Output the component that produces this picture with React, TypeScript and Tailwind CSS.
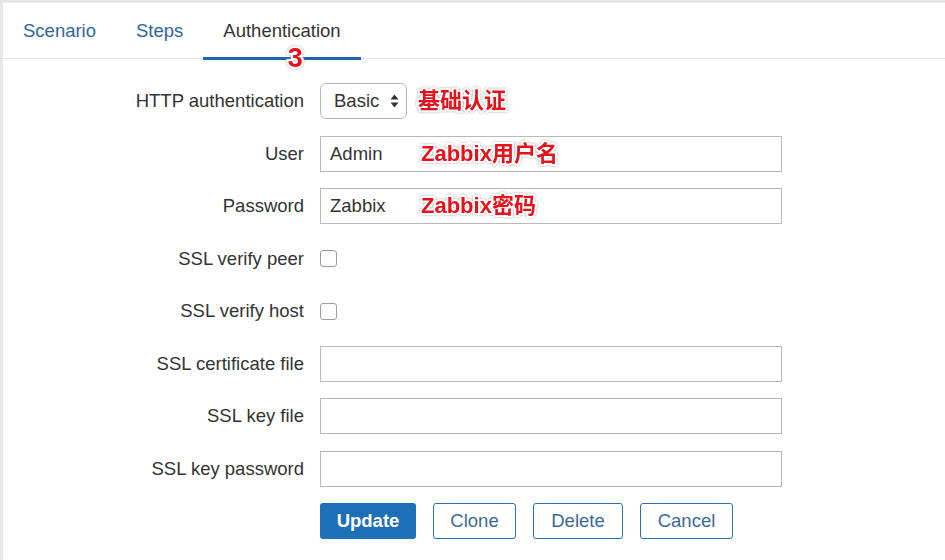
import React from "react";

const redText =
  "font-bold text-[#e5121b] [font-family:'Liberation_Sans','Noto_Sans_CJK_SC',sans-serif] [paint-order:stroke_fill] [-webkit-text-stroke:4px_#ffffff] [filter:drop-shadow(0_0_1px_#a8a8a8)]";

function Label({ children }: { children: React.ReactNode }) {
  return <div className="w-[301px] shrink-0 text-right text-[#333333]">{children}</div>;
}

function Row({ label, children }: { label: string; children: React.ReactNode }) {
  return (
    <div className="flex h-[36px] items-center gap-[16px]">
      <Label>{label}</Label>
      {children}
    </div>
  );
}

function TextInput({ value, note }: { value?: string; note?: string }) {
  return (
    <div className="relative flex h-[36px] w-[462px] items-center border border-[#b9b9b9] bg-white pl-[9px] text-[#333333]">
      {value}
      {note && <span className={`absolute left-[100px] top-[5px] text-[22px] leading-[24px] ${redText}`}>{note}</span>}
    </div>
  );
}

function Checkbox() {
  return <div className="h-[17px] w-[17px] rounded-[3px] border border-[#9d9d9d] bg-white" />;
}

export default function App() {
  return (
    <div className="h-[560px] w-[945px] overflow-hidden border-l-[3px] border-t-[3px] border-[#e6e6e6] bg-white text-[18.5px] [font-family:'Liberation_Sans',sans-serif]">
      {/* Tabs */}
      <div className="flex h-[56px] border-b border-[#e6e6e6]">
        <div className="flex h-[56px] items-start px-[20px] pt-[14px] text-[#2f669c]">Scenario</div>
        <div className="flex h-[56px] items-start px-[20px] pt-[14px] text-[#2f669c]">Steps</div>
        <div className="relative mb-[-1px] flex h-[57px] items-start border-b-[3px] border-[#1f66a6] px-[20px] pt-[14px] text-[#333333]">
          Authentication
          <span className={`absolute left-[92px] top-[40px] -translate-x-1/2 text-[27px] leading-[30px] ${redText}`}>3</span>
        </div>
      </div>

      {/* Form */}
      <div className="flex flex-col gap-[16.5px] pt-[24px]">
        <Row label="HTTP authentication">
          <div className="flex items-center">
            <div className="flex h-[36px] w-[87px] items-center justify-between rounded-[6px] border border-[#b9b9b9] bg-white pl-[13px] pr-[7px] text-[#333333]">
              <span>Basic</span>
              <svg width="9" height="14" viewBox="0 0 9 14">
                <path d="M4.5 0.5 L8.5 5.5 H0.5 Z" fill="#333" />
                <path d="M4.5 13.5 L8.5 8.5 H0.5 Z" fill="#333" />
              </svg>
            </div>
            <span className={`ml-[11px] text-[22px] leading-[24px] ${redText}`}>基础认证</span>
          </div>
        </Row>
        <Row label="User">
          <TextInput value="Admin" note="Zabbix用户名" />
        </Row>
        <Row label="Password">
          <TextInput value="Zabbix" note="Zabbix密码" />
        </Row>
        <Row label="SSL verify peer">
          <Checkbox />
        </Row>
        <Row label="SSL verify host">
          <Checkbox />
        </Row>
        <Row label="SSL certificate file">
          <TextInput />
        </Row>
        <Row label="SSL key file">
          <TextInput />
        </Row>
        <Row label="SSL key password">
          <TextInput />
        </Row>
        <div className="flex h-[36px] items-center gap-[17px] pl-[317px]">
          <div className="flex h-[36px] w-[96px] items-center justify-center rounded-[3px] bg-[#1f6fb6] font-bold text-white">Update</div>
          <div className="flex h-[36px] w-[83px] items-center justify-center rounded-[3px] border border-[#2a70b0] bg-white text-[#3b6a98]">Clone</div>
          <div className="flex h-[36px] w-[90px] items-center justify-center rounded-[3px] border border-[#2a70b0] bg-white text-[#3b6a98]">Delete</div>
          <div className="flex h-[36px] w-[93px] items-center justify-center rounded-[3px] border border-[#2a70b0] bg-white text-[#3b6a98]">Cancel</div>
        </div>
      </div>
    </div>
  );
}
